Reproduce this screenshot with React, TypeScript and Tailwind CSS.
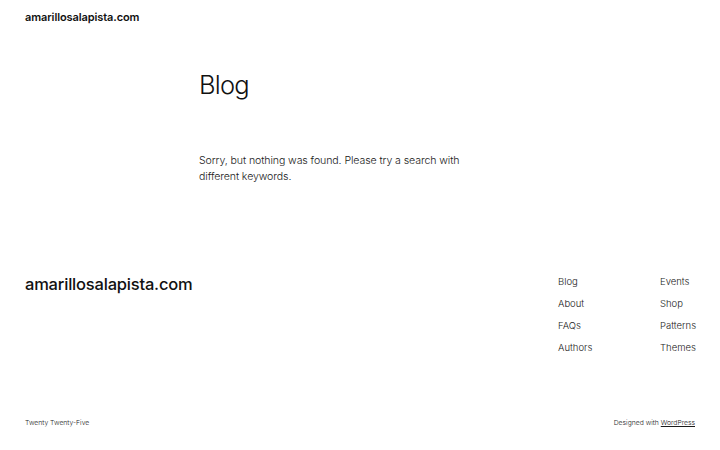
import React from "react";

export default function App() {
  const font = { fontFamily: "Inter, 'Noto Sans', sans-serif" };
  return (
    <div className="w-[720px] h-[450px] bg-white text-[#111111] flex flex-col" style={font}>
      <header className="px-[25px] pt-[10px] h-[40px]">
        <div className="text-[11px] font-semibold tracking-[-0.1px] leading-[15px]">amarillosalapista.com</div>
      </header>
      <main className="w-[322px] mx-auto pt-[29px]">
        <h1 className="text-[25.5px] font-light leading-[32px] tracking-[-0.8px]">Blog</h1>
        <p className="mt-[52px] max-w-[290px] text-[10.6px] font-light leading-[16px] text-[#1a1a1a] tracking-[-0.1px]">
          Sorry, but nothing was found. Please try a search with different keywords.
        </p>
      </main>
      <footer className="mt-[86px] px-[25px]">
        <div className="flex justify-between">
          <div className="text-[16.5px] font-medium tracking-[-0.2px] leading-[22px] pt-[2px]">amarillosalapista.com</div>
          <div className="flex text-[9.5px] font-light text-[#1a1a1a] leading-[12px] pt-[5px]">
            <div className="flex flex-col gap-[10px] w-[102px]">
              <span>Blog</span>
              <span>About</span>
              <span>FAQs</span>
              <span>Authors</span>
            </div>
            <div className="flex flex-col gap-[10px] w-[35px]">
              <span>Events</span>
              <span>Shop</span>
              <span>Patterns</span>
              <span>Themes</span>
            </div>
          </div>
        </div>
        <div className="flex justify-between mt-[64px] text-[6.8px] font-light text-[#1a1a1a] leading-[10px]">
          <span>Twenty Twenty-Five</span>
          <span>
            Designed with <span className="underline">WordPress</span>
          </span>
        </div>
      </footer>
    </div>
  );
}
